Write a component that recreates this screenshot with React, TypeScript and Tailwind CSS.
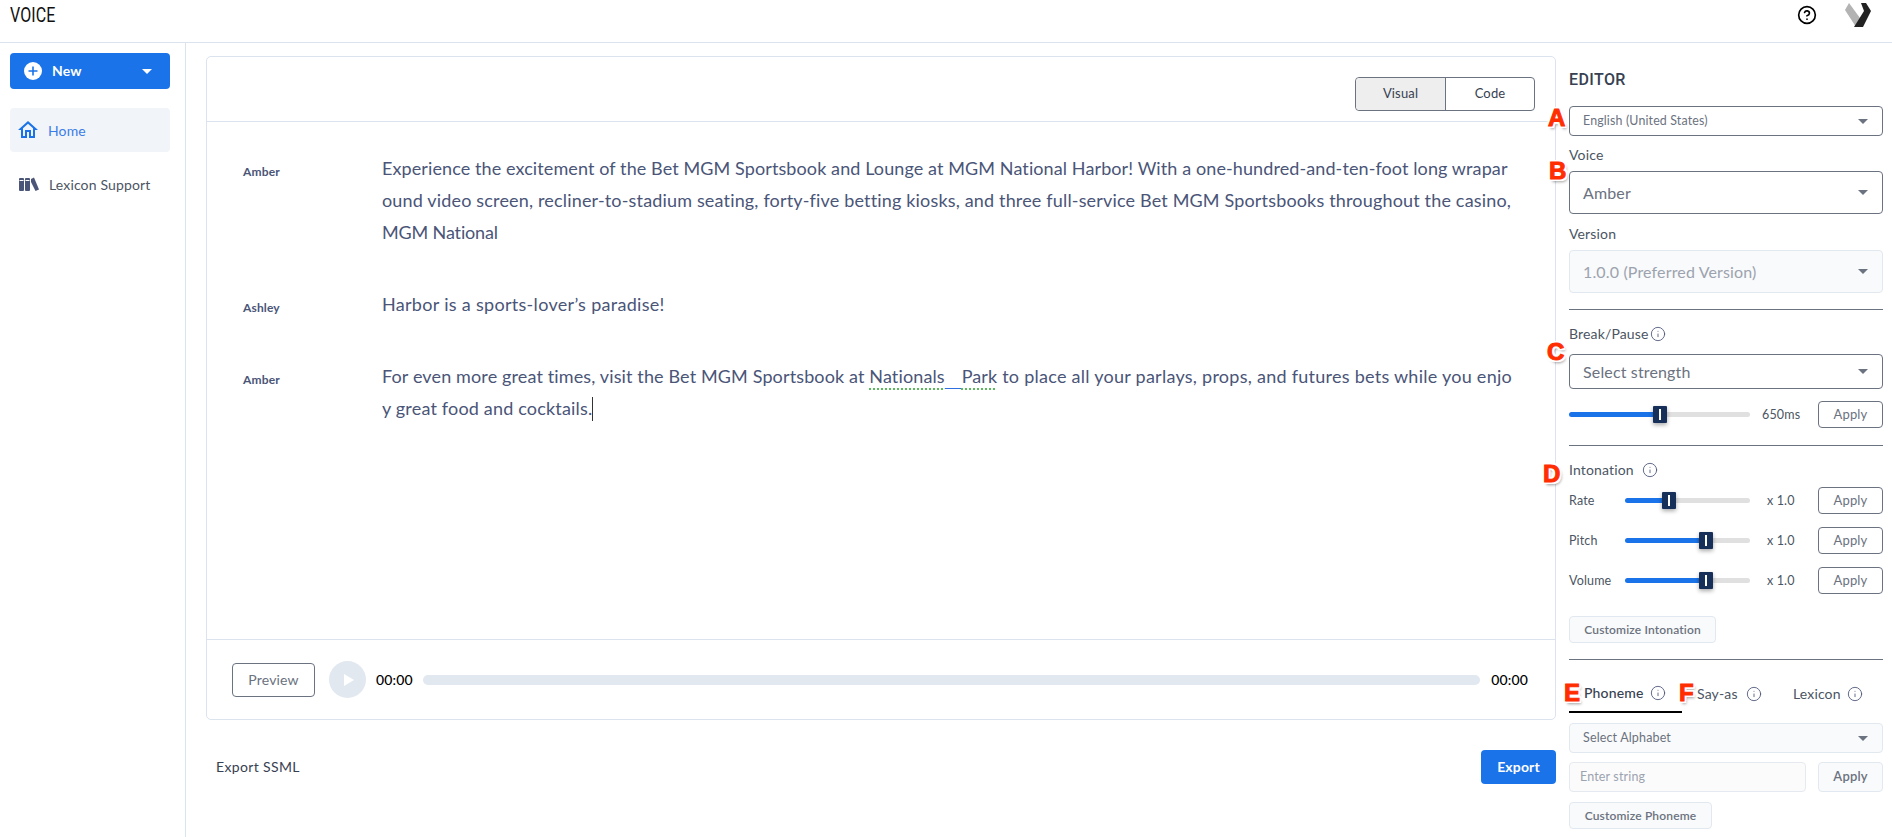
import { CircleHelp, Info } from "lucide-react";

const ann = "absolute z-10 font-['Liberation_Sans',sans-serif] font-bold text-[24px] leading-none text-[#ff2d00] [-webkit-text-stroke:1px_#ff2d00] [text-shadow:2px_2px_0_#fff,-2px_-2px_0_#fff,2px_-2px_0_#fff,-2px_2px_0_#fff,2px_0_0_#fff,-2px_0_0_#fff,0_2px_0_#fff,0_-2px_0_#fff,2px_3px_3px_#0006]";
const applyBtn = "h-[27px] w-[65px] shrink-0 rounded-[4px] border border-[#6b7280] pt-px text-[13px] text-[#6b7280] flex items-center justify-center";
const softBtn = "h-[27px] rounded-[4px] border border-[#e2e8f0] bg-[#f9fafb] text-[12px] font-semibold text-[#6b7280] flex items-center justify-center";

function Caret({ cls = "border-t-[#6b7280]" }: { cls?: string }) {
  return <span className={`block w-0 h-0 border-x-[5px] border-x-transparent border-t-[5px] ${cls}`} />;
}

function Select({ text, h, textCls, boxCls }: { text: string; h: string; textCls: string; boxCls: string }) {
  return (
    <div className={`${h} ${boxCls} rounded-[4px] border flex items-center justify-between pl-[13px] pr-[14px]`}>
      <span className={textCls}>{text}</span>
      <Caret />
    </div>
  );
}

function Slider({ pct, width }: { pct: number; width: string }) {
  return (
    <div className={`${width} flex items-center h-[17px] shrink-0`}>
      <div className="h-[5px] bg-[#1a73e8] rounded-l-full" style={{ width: `${pct}px` }} />
      <div className="relative z-[1] h-[17px] w-[14px] shrink-0 bg-[#17305a] rounded-[1px] shadow-[0_2px_4px_#0005] flex items-center justify-center">
        <div className="h-[11px] w-[2px] bg-white" />
      </div>
      <div className="h-[5px] flex-1 bg-[#e0e0e0] rounded-r-full" />
    </div>
  );
}

function IntonationRow({ label, pct, cls }: { label: string; pct: number; cls: string }) {
  return (
    <div className={`${cls} h-[27px] flex items-center`}>
      <span className="w-[56px] pt-px text-[12.5px] text-[#4b5563]">{label}</span>
      <Slider pct={pct} width="w-[125px]" />
      <span className="ml-[17px] w-[51px] pt-px text-[12.5px] text-[#4b5563]">x 1.0</span>
      <button className={applyBtn}>Apply</button>
    </div>
  );
}

function Speaker({ name, cls, children }: { name: string; cls: string; children: React.ReactNode }) {
  return (
    <div className={`${cls} flex`}>
      <div className="w-[175px] shrink-0 pl-[36px] pt-[12px] text-[12px] leading-[16px] font-bold text-[#4a5578]">{name}</div>
      <div className="whitespace-nowrap text-[18px] leading-[32px] text-[#4a5578]">{children}</div>
    </div>
  );
}

function Tab({ label, w, cls, iconCls }: { label: string; w: string; cls: string; iconCls: string }) {
  return (
    <div className={`${w} ${cls} h-full flex items-center pt-[14px]`}>
      <span>{label}</span>
      <Info size={16} className={`${iconCls} text-[#4a5578]`} strokeWidth={1.3} />
    </div>
  );
}

export default function App() {
  return (
    <div className="relative h-[837px] w-full overflow-hidden bg-white font-['Lato','Noto_Sans',sans-serif] tracking-[0.15px] text-[#374151]">
      <header className="h-[43px] border-b border-[#dbe3ee] flex items-start justify-between pl-[10px] pr-[21px]">
        <span className="mt-[5px] inline-block origin-left [transform:scaleX(0.8)] font-['Roboto',sans-serif] text-[20px] leading-[20px] text-[#111]">VOICE</span>
        <div className="flex items-center gap-[28px] mt-[3px]">
          <CircleHelp size={20} className="text-black" strokeWidth={2} />
          <svg width="26" height="24" viewBox="0 0 26 24">
            <path d="M0 7 L4 0 L15 15 L11 24 Z" fill="#b3b3b3" />
            <path d="M16 0 H21 L26 8 L18 24 H9 L19 8 Z" fill="#222" />
          </svg>
        </div>
      </header>

      <div className="flex h-[794px]">
        <aside className="w-[186px] shrink-0 border-r border-[#dbe3ee] pl-[10px] pr-[15px] pt-[10px]">
          <button className="h-[36px] w-[160px] rounded-[4px] bg-[#1a73e8] flex items-center pl-[14px] pr-[18px] text-white">
            <svg width="18" height="18" viewBox="0 0 18 18">
              <circle cx="9" cy="9" r="9" fill="#fff" />
              <path d="M9 4.5v9M4.5 9h9" stroke="#1a73e8" strokeWidth="1.6" />
            </svg>
            <span className="ml-[10px] pb-px text-[14px] font-bold">New</span>
            <span className="ml-auto"><Caret cls="border-t-white" /></span>
          </button>
          <div className="mt-[19px] h-[44px] rounded-[4px] bg-[#f1f4f9] flex items-center pl-[6px] text-[14px] text-[#3b7de8]">
            <svg width="24" height="24" viewBox="0 0 24 24" fill="#1a73e8"><path d="M12 5.69l5 4.5V18h-2v-6H9v6H7v-7.81l5-4.5M12 3L2 12h3v8h6v-6h2v6h6v-8h3L12 3z" /></svg>
            <span className="ml-[8px]">Home</span>
          </div>
          <div className="mt-[10px] h-[44px] flex items-center pl-[9px] text-[14px] text-[#4b5563]">
            <svg width="20" height="14" viewBox="0 0 20 14" fill="#4a5578">
              <rect x="0" y="1" width="5" height="13" rx="1" />
              <rect x="6" y="1" width="5" height="13" rx="1" />
              <path d="M0.5 3.5h4M6.5 3.5h4" stroke="#fff" strokeWidth="1" />
              <path d="M12 2 L15 0.5 L20 12.5 L16.5 14 L12 5 Z" />
            </svg>
            <span className="ml-[10px]">Lexicon Support</span>
          </div>
        </aside>

        <main className="w-[1383px] shrink-0 pl-[20px] pt-[13px]">
          <section className="h-[664px] w-[1350px] rounded-[5px] border border-[#dbe3ee] flex flex-col">
            <div className="h-[65px] shrink-0 border-b border-[#dbe3ee] flex items-center justify-end pr-[20px]">
              <div className="h-[34px] w-[180px] rounded-[4px] border border-[#6b7280] flex text-[13px] text-[#374151] mt-[10px]">
                <div className="w-[90px] bg-[#eeeeee] rounded-l-[4px] border-r border-[#6b7280] flex items-center justify-center">Visual</div>
                <div className="flex-1 flex items-center justify-center">Code</div>
              </div>
            </div>
            <div className="flex-1 pt-[30px]">
              <Speaker name="Amber" cls="">
                <span className="tracking-[0.1px]">Experience the excitement of the Bet MGM Sportsbook and Lounge at MGM National Harbor! With a one-hundred-and-ten-foot long wrapar</span><br />
                <span className="tracking-[0.165px]">ound video screen, recliner-to-stadium seating, forty-five betting kiosks, and three full-service Bet MGM Sportsbooks throughout the casino,</span><br />
                <span className="tracking-[-0.15px]">MGM National</span>
              </Speaker>
              <Speaker name="Ashley" cls="mt-[40px]"><span className="tracking-[0.3px]">Harbor is a sports-lover’s paradise!</span></Speaker>
              <Speaker name="Amber" cls="mt-[40px]">
                <span className="tracking-[0.13px]">For even more great times, visit the Bet MGM Sportsbook at </span>
                <span className="tracking-[0.13px] underline decoration-dotted decoration-[#5cb85c] decoration-2 underline-offset-[5px]">Nationals</span>
                <span className="tracking-[1px] underline decoration-[#2f6fe0] decoration-1 underline-offset-[5px]">&nbsp;&nbsp;&nbsp;</span>
                <span className="tracking-[0.13px] underline decoration-dotted decoration-[#5cb85c] decoration-2 underline-offset-[5px]">Park</span>
                <span className="tracking-[0.26px]"> to place all your parlays, props, and futures bets while you enjo</span><br />
                <span className="tracking-[0.18px]">y great food and cocktails.</span><span className="inline-block h-[24px] w-px bg-[#333] align-[-6px]" />
              </Speaker>
            </div>
            <div className="h-[80px] shrink-0 border-t border-[#dbe3ee] flex items-center pl-[25px] pr-[27px]">
              <button className="h-[34px] w-[83px] rounded-[4px] border border-[#6b7280] text-[14px] text-[#6b7280]">Preview</button>
              <div className="ml-[14px] h-[37px] w-[37px] rounded-full bg-[#e2e8f0] flex items-center justify-center">
                <span className="ml-[3px] w-0 h-0 border-y-[6px] border-y-transparent border-l-[10px] border-l-white" />
              </div>
              <span className="ml-[10px] text-[14px] font-medium text-black">00:00</span>
              <div className="ml-[10px] h-[10px] flex-1 rounded-full bg-[#e2e8f0]" />
              <span className="ml-[11px] text-[14px] font-medium text-black">00:00</span>
            </div>
          </section>
          <div className="mt-[30px] w-[1350px] h-[34px] flex items-center justify-between pl-[10px]">
            <span className="pb-[2px] text-[14px] tracking-[0.35px] text-[#374151]">Export SSML</span>
            <button className="h-[34px] w-[75px] rounded-[4px] bg-[#1a73e8] pb-[2px] text-[14px] font-bold text-white">Export</button>
          </div>
        </main>

        <aside className="w-[314px] shrink-0 text-[14px] text-[#4b5563]">
          <div className="mt-[27px] h-[20px] leading-[20px] font-['Roboto',sans-serif] text-[16px] font-medium tracking-[0.4px] text-[#374151]">EDITOR</div>
          <div className="mt-[16px]"><Select text="English (United States)" h="h-[30px]" boxCls="border-[#6b7280]" textCls="text-[12.4px] text-[#6b7280]" /></div>
          <div className="mt-[9px] h-[20px] leading-[20px]">Voice</div>
          <div className="mt-[6px]"><Select text="Amber" h="h-[43px]" boxCls="border-[#6b7280]" textCls="text-[16px] text-[#6b7280]" /></div>
          <div className="mt-[10px] h-[20px] leading-[20px]">Version</div>
          <div className="mt-[6px]"><Select text="1.0.0 (Preferred Version)" h="h-[43px]" boxCls="border-[#e2e8f0] bg-[#f9fafb]" textCls="text-[16px] text-[#9ca3af]" /></div>
          <hr className="mt-[16px] border-0 h-px bg-[#6b7280]" />
          <div className="mt-[14px] h-[20px] leading-[20px] flex items-center">Break/Pause<Info size={16} strokeWidth={1.3} className="ml-[1px] text-[#4a5578]" /></div>
          <div className="mt-[10px]"><Select text="Select strength" h="h-[35px]" boxCls="border-[#6b7280]" textCls="text-[16px] text-[#6b7280]" /></div>
          <div className="mt-[12px] h-[27px] flex items-center">
            <Slider pct={84} width="w-[181px]" />
            <span className="ml-[12px] w-[56px] pt-px text-[12.5px]">650ms</span>
            <button className={applyBtn}>Apply</button>
          </div>
          <hr className="mt-[17px] border-0 h-px bg-[#6b7280]" />
          <div className="mt-[14px] h-[20px] leading-[20px] flex items-center">Intonation<Info size={16} strokeWidth={1.3} className="ml-[8px] text-[#4a5578]" /></div>
          <IntonationRow label="Rate" pct={37} cls="mt-[7px]" />
          <IntonationRow label="Pitch" pct={74} cls="mt-[13px]" />
          <IntonationRow label="Volume" pct={74} cls="mt-[13px]" />
          <button className={`${softBtn} mt-[22px] w-[147px]`}>Customize Intonation</button>
          <hr className="mt-[16px] border-0 h-px bg-[#6b7280]" />
          <div className="h-[53px] flex">
            <Tab label="Phoneme" w="w-[113px] pl-[15px] border-b-2 border-black" cls="text-[#374151] font-medium" iconCls="ml-[6px]" />
            <Tab label="Say-as" w="w-[111px] pl-[15px]" cls="" iconCls="ml-[8px]" />
            <Tab label="Lexicon" w="w-[90px]" cls="" iconCls="ml-[6px]" />
          </div>
          <div className="mt-[10px]"><Select text="Select Alphabet" h="h-[30px]" boxCls="border-[#e2e8f0] bg-[#f9fafb]" textCls="text-[12.5px] text-[#6b7280]" /></div>
          <div className="mt-[9px] flex justify-between">
            <div className="h-[30px] w-[237px] rounded-[4px] border border-[#e5e9f0] bg-[#fbfbfc] pl-[10px] flex items-center text-[12.5px] text-[#9ca3af]">Enter string</div>
            <button className="h-[30px] w-[65px] rounded-[4px] border border-[#e2e8f0] bg-[#f9fafb] text-[13px] font-semibold text-[#6b7280]">Apply</button>
          </div>
          <button className={`${softBtn} mt-[10px] w-[143px]`}>Customize Phoneme</button>
        </aside>
      </div>

      <span className={`${ann} top-[106px] left-[1548px]`}>A</span>
      <span className={`${ann} top-[159px] left-[1549px]`}>B</span>
      <span className={`${ann} top-[340px] left-[1547px]`}>C</span>
      <span className={`${ann} top-[462px] left-[1543px]`}>D</span>
      <span className={`${ann} top-[681px] left-[1564px]`}>E</span>
      <span className={`${ann} top-[681px] left-[1679px]`}>F</span>
    </div>
  );
}
